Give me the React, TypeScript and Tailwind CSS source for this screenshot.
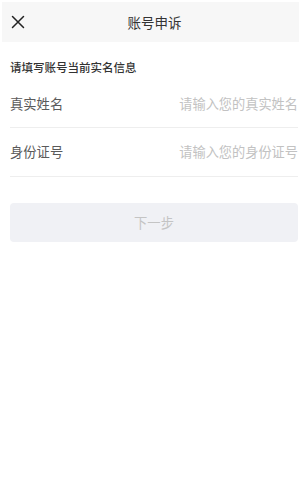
import React from "react";

export default function App() {
  return (
    <div
      className="w-[301px] h-[500px] bg-white pt-[2px] overflow-hidden"
      style={{ fontFamily: '"Noto Sans CJK SC", "Noto Sans", sans-serif' }}
    >
      <div className="mx-[2px] h-[40px] bg-[#f7f7f7] relative flex items-center justify-center">
        <svg
          className="absolute left-[9px] top-[13px]"
          width="14"
          height="14"
          viewBox="0 0 14 14"
          fill="none"
          stroke="#222"
          strokeWidth="1.5"
          strokeLinecap="round"
        >
          <path d="M1.5 1.5 L12.5 12.5 M12.5 1.5 L1.5 12.5" />
        </svg>
        <span className="text-[13.5px] leading-[16px] text-[#333] ml-[8px]">账号申诉</span>
      </div>
      <div className="pl-[10px] pr-[3px]">
        <div className="mt-[17px] text-[11.5px] leading-[16px] text-[#333] font-medium">
          请填写账号当前实名信息
        </div>
        <div className="mt-[5px] h-[48px] border-b border-[#eeeeee] flex items-center justify-between">
          <span className="text-[13.3px] text-[#5a5a5a]">真实姓名</span>
          <span className="text-[13.2px] text-[#c2c2c2]">请输入您的真实姓名</span>
        </div>
        <div className="h-[49px] border-b border-[#eeeeee] flex items-center justify-between">
          <span className="text-[13.3px] text-[#5a5a5a]">身份证号</span>
          <span className="text-[13.2px] text-[#c2c2c2]">请输入您的身份证号</span>
        </div>
        <div className="mt-[26px] h-[39px] rounded-[4px] bg-[#f0f1f5] flex items-center justify-center">
          <span className="text-[13.3px] text-[#c4c4c4]">下一步</span>
        </div>
      </div>
    </div>
  );
}
